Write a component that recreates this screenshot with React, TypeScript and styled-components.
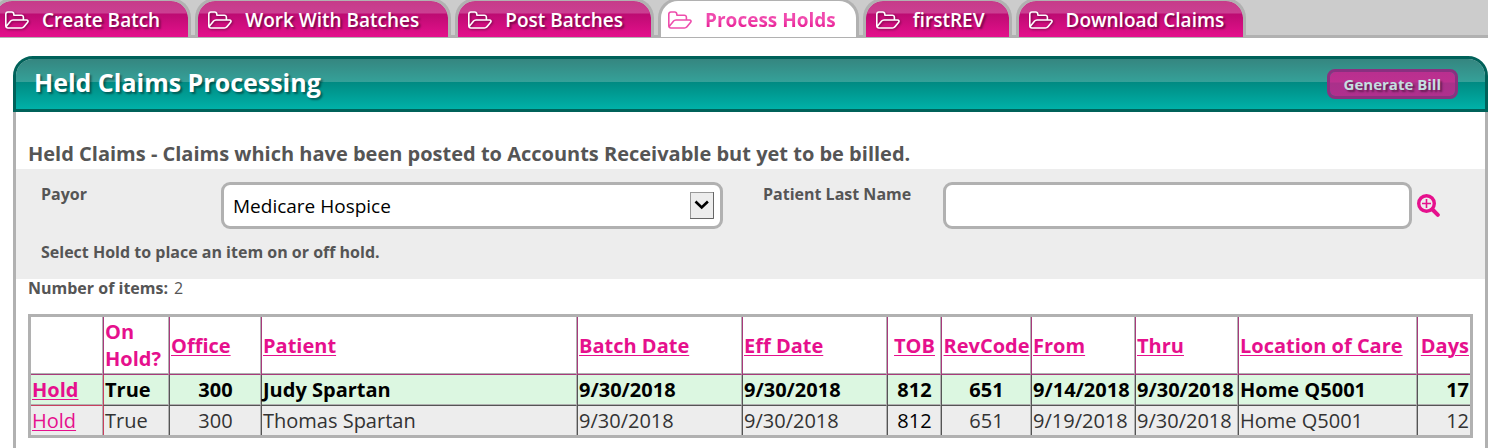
import React from "react";
import styled, { createGlobalStyle, css } from "styled-components";

const PINK = "#e6108d";
const GREY = "#b1b1b1";

const GlobalStyle = createGlobalStyle`
  * { box-sizing: border-box; }
  body {
    margin: 0;
    background: #fff;
    color: #555;
    font-family: "Open Sans", "Noto Sans", sans-serif;
    font-size: 16px;
    line-height: 24px;
  }
`;

const TabBar = styled.nav`
  display: flex;
  gap: 4px;
  padding-right: 8px;
  background: #ccc;
  border-bottom: 3px solid ${GREY};
`;

const Tab = styled.a<{ $active?: boolean; $end: number }>`
  display: flex;
  align-items: center;
  flex: none;
  gap: 13px;
  height: 39px;
  margin: -2px 0;
  padding: 1px ${(p) => p.$end}px 0 10px;
  border: 3px solid ${GREY};
  border-bottom: 0;
  border-radius: 20px 20px 0 0;
  color: #fff;
  font-size: 19px;
  font-weight: 600;
  line-height: 36px;
  text-decoration: none;
  white-space: nowrap;
  text-shadow: 2px 2px 2px rgba(0, 0, 0, 0.4);
  background: linear-gradient(#c63b89 0, #cb3f92 12px, #bd0b72 13px, #e4108c 36px) padding-box;

  &:first-child {
    margin-left: -8px;
  }

  svg {
    filter: drop-shadow(1px 1px 1px rgba(0, 0, 0, 0.4));
  }

  ${(p) =>
    p.$active &&
    css`
      padding-left: 7px;
      padding-top: 2px;
      background: #fff;
      color: ${PINK};
      font-weight: 700;
      text-shadow: none;

      svg {
        filter: none;
        color: #ee4dac;
      }

      span {
        color: transparent;
        background: linear-gradient(#f04aae 50%, #e6108d 75%);
        background-clip: text;
      }
    `}
`;

const Panel = styled.main`
  margin: 18px 0 0 13px;
`;

const PanelHeader = styled.header`
  display: flex;
  align-items: center;
  justify-content: space-between;
  height: 56px;
  padding: 0 27px 0 18px;
  border: 3px solid #00625a;
  border-radius: 20px 20px 0 0;
  background: linear-gradient(#358680 0, #35a199 23px, #008a82 23px, #00b1a8 50px) padding-box;
`;

const Title = styled.h1`
  margin: 0;
  color: #fff;
  font-size: 25px;
  font-weight: 700;
  line-height: 46px;
  padding-bottom: 4px;
  text-shadow: 2px 2px 2px rgba(0, 0, 0, 0.4);
`;

const BillButton = styled.button`
  height: 30px;
  padding: 0 14px;
  border: 3px solid #8a3080;
  border-radius: 8px;
  background: linear-gradient(#b92f8f 0, #bd3190 10px, #a9318a 11px, #b02f8e 24px) padding-box;
  color: #c5dfe0;
  font: 700 15px/24px "Open Sans", "Noto Sans", sans-serif;
  text-shadow: 2px 2px 2px rgba(0, 0, 0, 0.4);
`;

const PanelBody = styled.div`
  padding: 28px 0 24px;
  border: solid ${GREY};
  border-width: 0 3px;
`;

const Heading = styled.h2`
  margin: 0 12px;
  padding-bottom: 2px;
  font-size: 20px;
  font-weight: 700;
  line-height: 27px;
`;

const Filters = styled.form`
  padding: 13px 45px 14px 25px;
  background: #ededed;
`;

const FilterRow = styled.div`
  display: grid;
  grid-template-columns: 180px minmax(0, 542fr) 180px minmax(0, 469fr) 28px;
  align-items: start;

  label {
    font-weight: 700;
  }
`;

const SelectBox = styled.div`
  position: relative;
  margin-right: 40px;

  svg {
    position: absolute;
    top: 10px;
    right: 9px;
    pointer-events: none;
  }
`;

const controlStyle = css`
  display: block;
  width: 100%;
  height: 47px;
  padding: 1px 9px 0;
  border: 3px solid ${GREY};
  border-radius: 9px;
  background: #fff;
  color: #000;
  font: 400 19px/27px "Open Sans", "Noto Sans", sans-serif;
`;

const Select = styled.select`
  ${controlStyle}
  appearance: none;
`;

const Input = styled.input`
  ${controlStyle}
`;

const SearchButton = styled.button`
  display: block;
  margin: 12px 0 0 5px;
  padding: 0;
  border: 0;
  background: none;
  color: ${PINK};
`;

const Hint = styled.p`
  margin: 11px 0 0;
  padding-bottom: 1px;
  font-weight: 700;
`;

const Count = styled.p`
  display: flex;
  gap: 6px;
  margin: 0 12px 14px;
  line-height: 18px;
  padding-bottom: 3px;
`;

const TableFrame = styled.div`
  margin: 0 12px;
  border: 3px solid ${GREY};
`;

const Grid = styled.table`
  width: 100%;
  table-layout: fixed;
  border-spacing: 0;
  font-size: 20px;
  line-height: 27px;

  a {
    color: ${PINK};
    text-decoration-thickness: 1px;
    text-underline-offset: 2px;
  }
`;

type Align = "left" | "center" | "right";

const cellStyle = css<{ $align?: Align }>`
  padding: 1px 0 1px 1px;
  text-align: ${(p) => p.$align ?? "left"};
  white-space: nowrap;
  border-left: 1px solid #555;

  &:first-child {
    border-left: 0;
  }

  &:not(:last-child) {
    border-right: 1px solid ${GREY};
  }

  &:last-child {
    padding-right: 1px;
  }
`;

const HeadCell = styled.th<{ $align?: Align }>`
  ${cellStyle}
  border-left-color: #a83a7c;
  border-bottom: 1px solid #a83a7c;
  box-shadow: inset 0 -1px ${GREY};
  padding-bottom: 2px;
  color: ${PINK};
  font-weight: 700;
  white-space: normal;
`;

const Cell = styled.td<{ $align?: Align; $dark?: boolean }>`
  ${cellStyle}
  ${(p) => p.$dark && "color: #000;"}
`;

const Row = styled.tr<{ $selected?: boolean }>`
  background: #ededed;
  color: #333;

  ${(p) =>
    p.$selected &&
    css`
      background: #dcf7e1;
      color: #000;
      font-weight: 700;

      ${Cell} {
        padding-bottom: 2px;
        border-bottom: 1px solid #555;
        box-shadow: inset 0 -1px ${GREY};
      }

      ${Cell}:first-child {
        border-bottom-color: #c8405f;
      }
    `}

  ${Cell}:nth-child(2) {
    border-left-color: #c8405f;
  }
`;

const FolderIcon = () => (
  <svg width="24" height="18" viewBox="0 0 1920 1408" fill="currentColor" aria-hidden="true">
    <path d="M1781 803q0-35-53-35H640q-40 0-85.5 21.5T483 842l-294 363q-18 24-18 40 0 35 53 35h1088q40 0 86-22t71-53l294-363q18-22 18-39zM640 640h768V480q0-40-28-68t-68-28H736q-40 0-68-28t-28-68v-64q0-40-28-68t-68-28H224q-40 0-68 28t-28 68v853l256-315q44-53 116-87.5T640 640zm1269 163q0 62-46 120l-295 363q-43 53-116 87.5t-140 34.5H224q-92 0-158-66T0 1184V224q0-92 66-158T224 0h320q92 0 158 66t66 158v32h544q92 0 158 66t66 158v160h192q54 0 99 24.5t67 70.5q15 32 15 68z" />
  </svg>
);

const SearchIcon = () => (
  <svg width="23" height="23" viewBox="0 0 23 23" fill="none" stroke="currentColor" aria-hidden="true">
    <circle cx="9.5" cy="9.5" r="7.8" strokeWidth="3.4" />
    <path d="M5 9.5h9M9.5 5v9" strokeWidth="1.6" />
    <path d="M15.5 15.5l5.3 5.3" strokeWidth="4" strokeLinecap="round" />
  </svg>
);

const ArrowIcon = () => (
  <svg width="24" height="27" viewBox="0 0 24 27" aria-hidden="true">
    <rect x="0.5" y="0.5" width="23" height="26" fill="#ededed" stroke="#999" />
    <path d="M23.5 0v26.5H0" fill="none" stroke="#666" />
    <path d="M5.500 9.500l6.200 6 6.200-6" fill="none" stroke="#000" strokeWidth="2.600" />
  </svg>
);

const tabs = [
  { label: "Create Batch", end: 28 },
  { label: "Work With Batches", end: 29 },
  { label: "Post Batches", end: 28 },
  { label: "Process Holds", end: 20, active: true },
  { label: "firstREV", end: 24 },
  { label: "Download Claims", end: 19 },
];

const columns: { label: string; width?: number; align?: Align; link?: boolean }[] = [
  { label: "", width: 72 },
  { label: "On Hold?", width: 66 },
  { label: "Office", width: 92, link: true },
  { label: "Patient", link: true },
  { label: "Batch Date", width: 165, link: true },
  { label: "Eff Date", width: 145, link: true },
  { label: "TOB", width: 54, align: "center", link: true },
  { label: "RevCode", width: 90, align: "center", link: true },
  { label: "From", width: 104, link: true },
  { label: "Thru", width: 103, link: true },
  { label: "Location of Care", width: 179, link: true },
  { label: "Days", width: 53, align: "right", link: true },
];

const claims = [
  { patient: "Judy Spartan", from: "9/14/2018", days: 17, selected: true },
  { patient: "Thomas Spartan", from: "9/19/2018", days: 12, selected: false },
];

export default function App() {
  return (
    <>
      <GlobalStyle />
      <TabBar>
        {tabs.map((t) => (
          <Tab key={t.label} href="#" $active={t.active} $end={t.end} aria-current={t.active ? "page" : undefined}>
            <FolderIcon />
            <span>{t.label}</span>
          </Tab>
        ))}
      </TabBar>
      <Panel>
        <PanelHeader>
          <Title>Held Claims Processing</Title>
          <BillButton type="button">Generate Bill</BillButton>
        </PanelHeader>
        <PanelBody>
          <Heading>Held Claims - Claims which have been posted to Accounts Receivable but yet to be billed.</Heading>
          <Filters onSubmit={(e) => e.preventDefault()}>
            <FilterRow>
              <label htmlFor="payor">Payor</label>
              <SelectBox>
                <Select id="payor" defaultValue="medicare">
                  <option value="medicare">Medicare Hospice</option>
                </Select>
                <ArrowIcon />
              </SelectBox>
              <label htmlFor="last-name">Patient Last Name</label>
              <Input id="last-name" type="text" />
              <SearchButton type="submit" aria-label="Search">
                <SearchIcon />
              </SearchButton>
            </FilterRow>
            <Hint>Select Hold to place an item on or off hold.</Hint>
          </Filters>
          <Count>
            <b>Number of items:</b>
            <span>2</span>
          </Count>
          <TableFrame>
            <Grid>
              <colgroup>
                {columns.map((c) => (
                  <col key={c.label} width={c.width} />
                ))}
              </colgroup>
              <thead>
                <tr>
                  {columns.map((c) => (
                    <HeadCell key={c.label} $align={c.align} scope="col">
                      {c.link ? <a href="#">{c.label}</a> : c.label}
                    </HeadCell>
                  ))}
                </tr>
              </thead>
              <tbody>
                {claims.map((c) => (
                  <Row key={c.patient} $selected={c.selected}>
                    <Cell>
                      <a href="#">Hold</a>
                    </Cell>
                    <Cell>True</Cell>
                    <Cell $align="center">300</Cell>
                    <Cell>{c.patient}</Cell>
                    <Cell>9/30/2018</Cell>
                    <Cell>9/30/2018</Cell>
                    <Cell $align="center" $dark>812</Cell>
                    <Cell $align="center">651</Cell>
                    <Cell>{c.from}</Cell>
                    <Cell>9/30/2018</Cell>
                    <Cell>Home Q5001</Cell>
                    <Cell $align="right">{c.days}</Cell>
                  </Row>
                ))}
              </tbody>
            </Grid>
          </TableFrame>
        </PanelBody>
      </Panel>
    </>
  );
}
